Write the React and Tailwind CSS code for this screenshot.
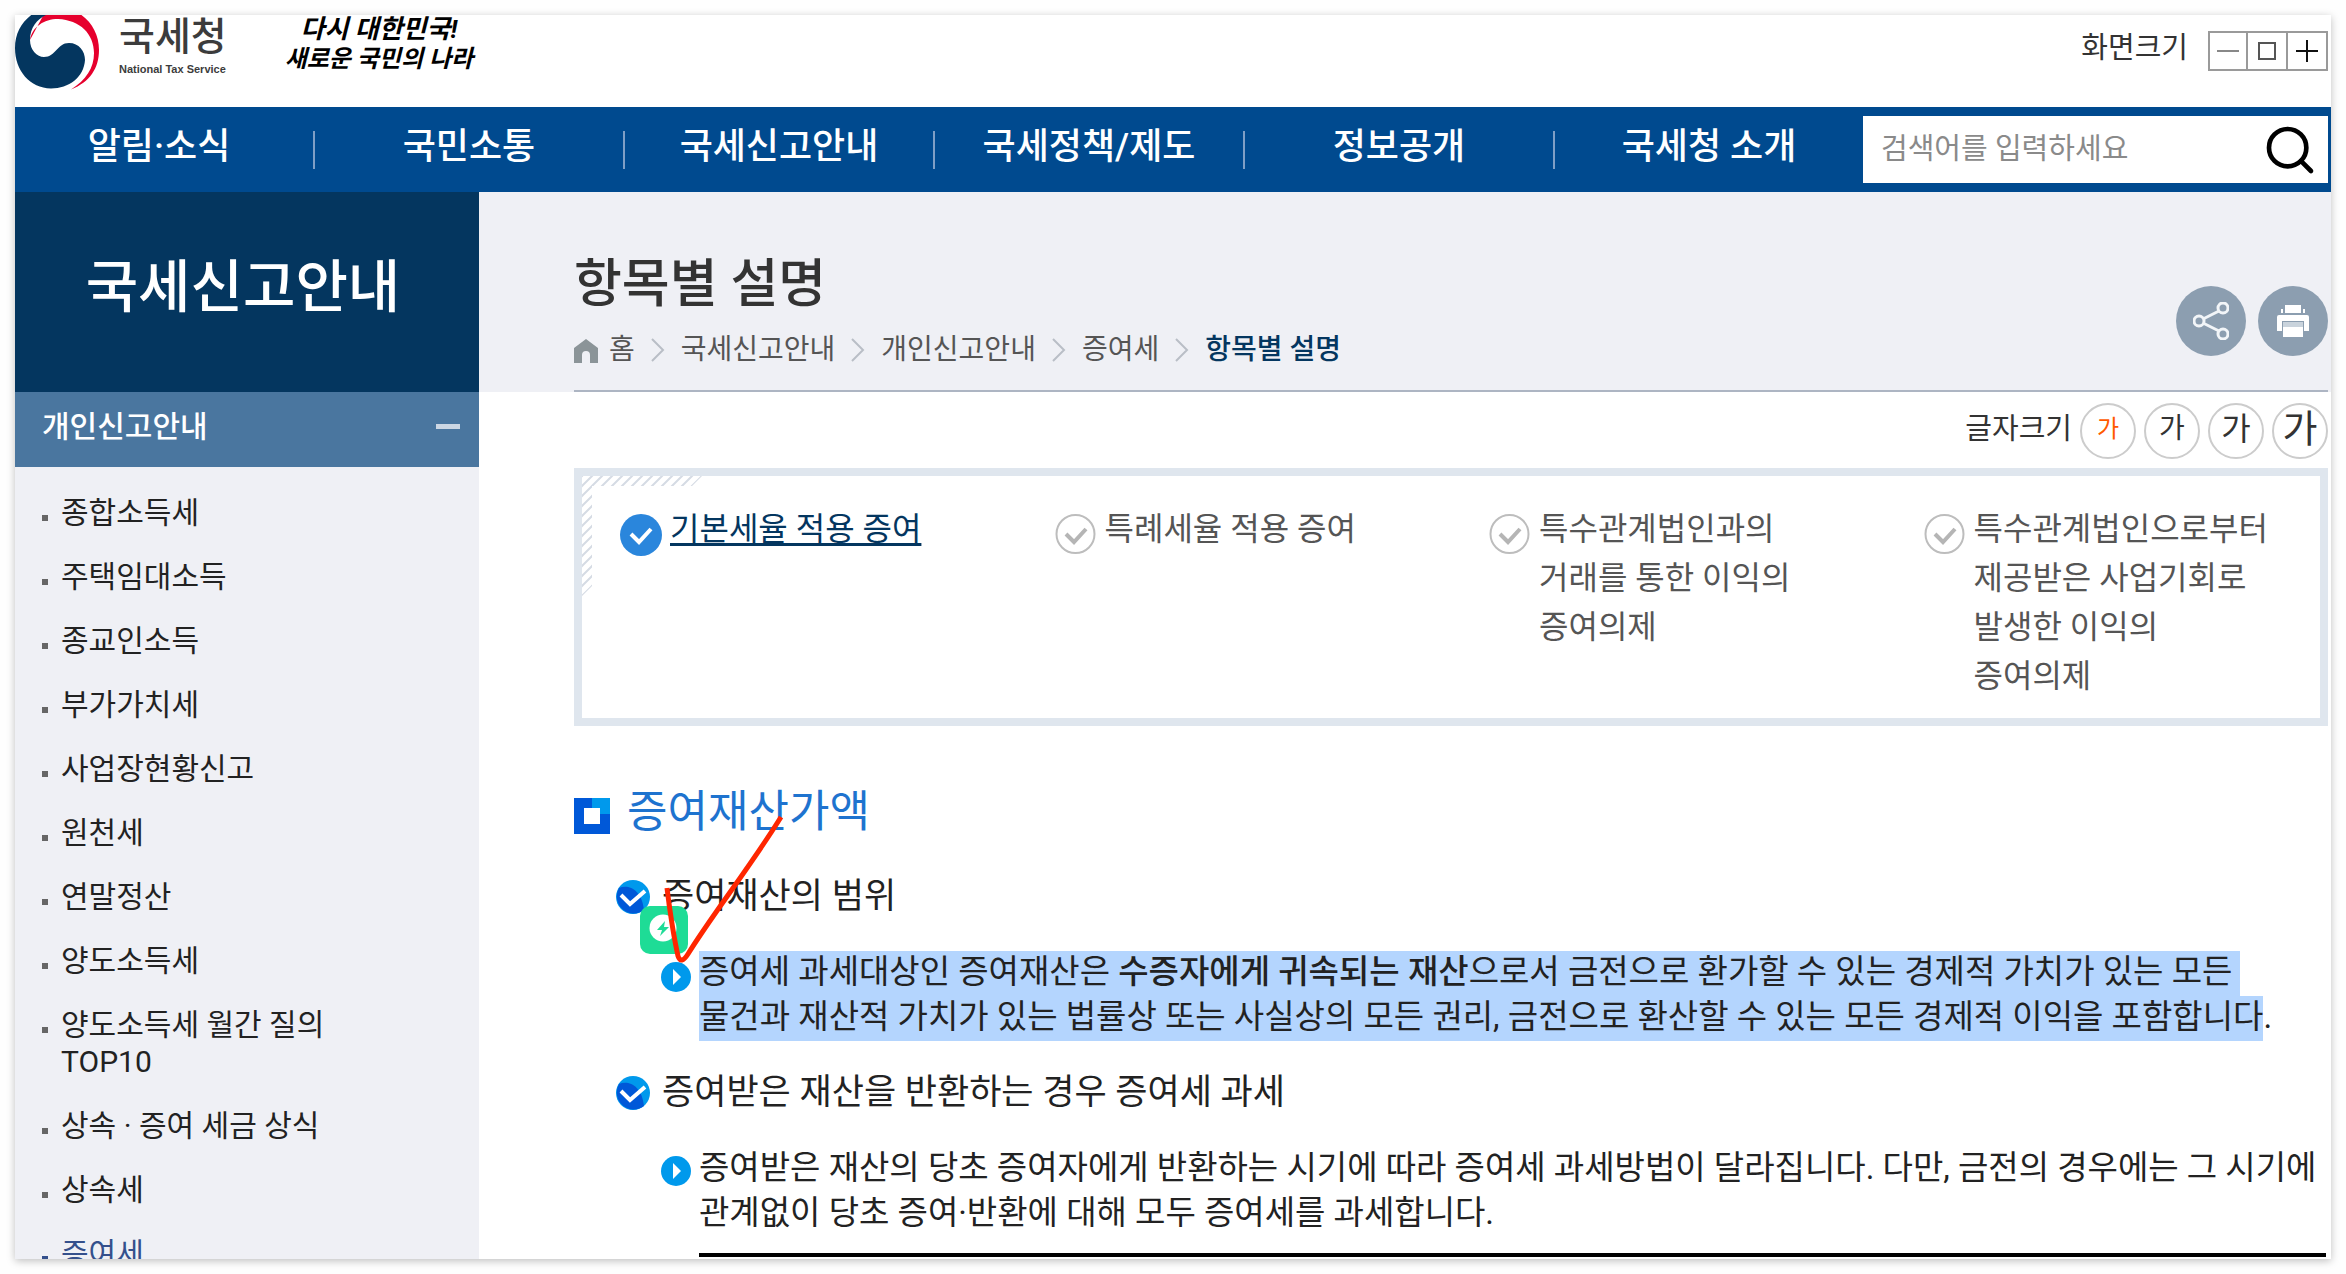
import React, { useState } from 'react';
import { Search } from 'lucide-react';

const navItems = ['알림·소식', '국민소통', '국세신고안내', '국세정책/제도', '정보공개', '국세청 소개'];

const sideItems = [
  '종합소득세',
  '주택임대소득',
  '종교인소득',
  '부가가치세',
  '사업장현황신고',
  '원천세',
  '연말정산',
  '양도소득세',
  '양도소득세 월간 질의 TOP10',
  '상속 · 증여 세금 상식',
  '상속세',
  '증여세',
];

const crumbs = ['국세신고안내', '개인신고안내', '증여세'];

const tabs = [
  ['기본세율 적용 증여'],
  ['특례세율 적용 증여'],
  ['특수관계법인과의', '거래를 통한 이익의', '증여의제'],
  ['특수관계법인으로부터', '제공받은 사업기회로', '발생한 이익의', '증여의제'],
];

const fontSizes = ['text-[24px]', 'text-[28px]', 'text-[32px]', 'text-[38px]'];

function Logo() {
  return (
    <svg className="w-[85px] h-[75px] shrink-0" viewBox="15 15 85 75" aria-hidden="true">
      <path
        d="M30 40C32 27 44 19 58 19C80 20 94 34 94 53C94 68 86 80 71 89.5C90 82 99 68 99 50C99 35 92 22 80 14L44 14Z"
        fill="#e6002d"
      />
      <path
        d="M46 15C37 19 30 28 30 40C30 50 37 57 44 57C56 57 57 43 69 43C79 43 85 51 85 60C84 77 69 88.5 51 88.5C30 88 15 71 15 48C15 33 22 21 34 13Z"
        fill="#04365f"
      />
    </svg>
  );
}

function ShareIcon() {
  return (
    <svg className="w-9 h-[38px]" viewBox="0 0 36 38" fill="none" stroke="#f2f5f8" strokeWidth="3" aria-hidden="true">
      <circle cx="6" cy="19" r="5" />
      <circle cx="30" cy="6" r="5" />
      <circle cx="30" cy="32" r="5" />
      <path d="M10 17L26 9M10 21L26 29" />
    </svg>
  );
}

function PrinterIcon() {
  return (
    <svg className="w-8 h-8" viewBox="0 0 32 32" fill="#fff" aria-hidden="true">
      <path d="M8 0h16v8H8zM4 4h2v4H4zM26 4h2v4h-2zM2 10h28a2 2 0 0 1 2 2v14h-5V16H5v10H0V12a2 2 0 0 1 2-2z" />
      <path d="M6 17h20v5H6z" fill="#c9d3dc" />
      <path d="M6 22h20v10H6z" />
    </svg>
  );
}

function HomeIcon() {
  return (
    <svg className="w-6 h-6 mt-0.5" viewBox="0 0 24 24" aria-hidden="true">
      <path d="M12 0L24 9V24H16V16A4 4 0 0 0 8 16V24H0V9Z" fill="#8b9498" />
    </svg>
  );
}

function Chevron() {
  return (
    <svg className="w-[14px] h-6 mx-4" viewBox="0 0 14 24" fill="none" aria-hidden="true">
      <path d="M1 1l11 11L1 23" stroke="#b9bec6" strokeWidth="2" />
    </svg>
  );
}

function TabCheck({ active }) {
  return (
    <svg className="w-[42px] h-[42px] mt-[9px] shrink-0" viewBox="0 0 42 42" fill="none" aria-hidden="true">
      {active ? (
        <circle cx="21" cy="21" r="21" fill="#2a86dc" />
      ) : (
        <circle cx="20.5" cy="20" r="19" stroke="#bdbdbd" strokeWidth="2" />
      )}
      <path d="M11 20l8 8 12-13" stroke={active ? '#fff' : '#b5b5b5'} strokeWidth="4" />
    </svg>
  );
}

function SquareIcon() {
  return (
    <svg className="w-9 h-9 mt-2" viewBox="0 0 36 36" aria-hidden="true">
      <path d="M0 0h36v36H0z" fill="#0058d8" />
      <path d="M18 0h18v16H18z" fill="#0099ec" />
      <path d="M10 10h16v16H10z" fill="#fff" />
    </svg>
  );
}

function HeadingCheck() {
  return (
    <svg className="w-[34px] h-[34px]" viewBox="0 0 34 34" aria-hidden="true">
      <circle cx="17" cy="17" r="17" fill="#0099ec" />
      <path d="M3 8C12 4 26 9 28 30A17 17 0 0 1 3 8Z" fill="#0058d8" />
      <path d="M5 15l9 9 15-13" fill="none" stroke="#fff" strokeWidth="4" />
    </svg>
  );
}

function ArrowBullet() {
  return (
    <svg className="w-[30px] h-[30px] mt-[11px] shrink-0" viewBox="0 0 30 30" aria-hidden="true">
      <circle cx="15" cy="15" r="15" fill="#0099ec" />
      <path d="M12 7l8 8-8 8z" fill="#fff" />
    </svg>
  );
}

function SubHeading({ children }) {
  return (
    <h3 className="flex items-center gap-3 text-[35px] leading-[50px] text-[#222]">
      <HeadingCheck />
      {children}
    </h3>
  );
}

export default function App() {
  const [query, setQuery] = useState('');
  const [fontSize, setFontSize] = useState(0);

  return (
    <div className="h-screen p-[15px] bg-[#fefefe] font-['Roboto','Noto_Sans_CJK_KR',sans-serif] break-keep">
      <div className="h-full overflow-hidden bg-white shadow-[0_2px_8px_rgba(0,0,0,0.25)]">
        {/* Header */}
        <header className="h-[92px] flex items-start justify-between pr-[3px]">
          <div className="flex items-start">
            <Logo />
            <div className="ml-[19px] text-[#3c3c3c]">
              <div className="text-[39px] leading-[44px] font-medium">국세청</div>
              <div className="font-['Liberation_Sans',sans-serif] text-[11px] leading-4 font-bold mt-0.5">
                National Tax Service
              </div>
            </div>
            <div className="ml-[58px] text-black italic font-bold text-center">
              <div className="text-[26px] leading-7">다시 대한민국!</div>
              <div className="text-[24px] leading-8">새로운 국민의 나라</div>
            </div>
          </div>
          <div className="flex items-start gap-5 pt-4 text-[#333]">
            <span className="text-[29px] leading-[34px]">화면크기</span>
            <div className="flex h-10 border-2 border-[#9a9a9a] divide-x-2 divide-[#9a9a9a]">
              <button className="w-[38px] flex items-center justify-center" aria-label="축소">
                <span className="w-[22px] h-[2px] bg-[#888]" />
              </button>
              <button className="w-10 flex items-center justify-center" aria-label="기본">
                <span className="w-[18px] h-[18px] border-2 border-[#555]" />
              </button>
              <button className="w-[38px] flex items-center justify-center" aria-label="확대">
                <svg className="w-[22px] h-[22px]" viewBox="0 0 22 22" stroke="#111" strokeWidth="2">
                  <path d="M11 0v22M0 11h22" />
                </svg>
              </button>
            </div>
          </div>
        </header>

        {/* Navigation */}
        <div className="h-[85px] flex items-center bg-[#004a8f] pr-[3px]">
          <nav className="flex-1 -ml-[10px]">
            <ul className="flex items-center">
              {navItems.map((item, i) => (
                <li
                  key={item}
                  className={`flex-1 h-[38px] flex items-center justify-center ${
                    i < navItems.length - 1 ? 'border-r-2 border-[#7f9fc6]' : ''
                  }`}
                >
                  <a href="#" className="mb-1.5 text-[36px] leading-[38px] font-medium text-white">
                    {item}
                  </a>
                </li>
              ))}
            </ul>
          </nav>
          <form className="w-[465px] h-[67px] flex items-center bg-white pl-[18px] pr-[10px]">
            <input
              type="text"
              aria-label="검색어"
              value={query}
              onChange={(e) => setQuery(e.target.value)}
              placeholder="검색어를 입력하세요"
              className="flex-1 min-w-0 h-full pb-0.5 text-[29px] text-[#333] placeholder:text-[#8a8a8a] outline-none"
            />
            <button type="button" aria-label="검색">
              <Search className="w-[56px] h-[56px] text-black" strokeWidth={2} />
            </button>
          </form>
        </div>

        <div className="flex">
          {/* Sidebar */}
          <aside className="w-[464px] shrink-0 bg-[#eff0f5]">
            <h2 className="h-[200px] pb-2 pr-2 flex items-center justify-center bg-[#04365f] text-white text-[57px] font-medium">
              국세신고안내
            </h2>
            <button className="w-full h-[75px] pl-[27px] pr-[19px] pb-1.5 flex items-center justify-between bg-[#4a769f] text-white text-[30px] font-medium">
              개인신고안내
              <span className="w-6 h-[5px] bg-[#ccd7e4]" />
            </button>
            <ul className="pt-[27px] flex flex-col gap-[27px]">
              {sideItems.map((item) => (
                <li
                  key={item}
                  className={`flex items-start gap-[13px] pl-[27px] pr-[140px] text-[30px] leading-[37px] ${
                    item === '증여세' ? 'text-[#34508c]' : 'text-[#222]'
                  }`}
                >
                  <span
                    className={`w-[6px] h-[6px] mt-[21px] shrink-0 ${
                      item === '증여세' ? 'bg-[#34508c]' : 'bg-[#666]'
                    }`}
                  />
                  <a href="#">{item}</a>
                </li>
              ))}
            </ul>
          </aside>

          <main className="flex-1 min-w-0">
            {/* Page title */}
            <div className="h-[200px] pl-[95px] pr-[3px] bg-[#eff0f5]">
              <div className="h-full flex justify-between border-b-2 border-[#adb5c3]">
                <div className="pt-[63px]">
                  <h1 className="text-[52px] leading-[60px] font-medium text-[#333]">항목별 설명</h1>
                  <div className="mt-[15px] flex items-center text-[28px] leading-10 text-[#555]">
                    <HomeIcon />
                    <a href="#" className="ml-[11px]">홈</a>
                    {crumbs.map((c) => (
                      <React.Fragment key={c}>
                        <Chevron />
                        <a href="#">{c}</a>
                      </React.Fragment>
                    ))}
                    <Chevron />
                    <span className="font-medium text-[#04365f]">항목별 설명</span>
                  </div>
                </div>
                <div className="flex gap-3 pt-[94px]">
                  <button className="w-[70px] h-[70px] rounded-full bg-[#8c9eb0] flex items-center justify-center" aria-label="공유">
                    <ShareIcon />
                  </button>
                  <button className="w-[70px] h-[70px] rounded-full bg-[#8c9eb0] flex items-center justify-center" aria-label="인쇄">
                    <PrinterIcon />
                  </button>
                </div>
              </div>
            </div>

            <div className="pl-[95px] pr-[3px]">
              {/* Text size */}
              <div className="h-[76px] pt-[11px] flex justify-end gap-2">
                <span className="text-[29px] leading-[52px] text-[#333]">글자크기</span>
                {fontSizes.map((size, i) => (
                  <button
                    key={size}
                    onClick={() => setFontSize(i)}
                    className={`w-14 h-14 pb-1 rounded-full border-2 border-[#ccc] flex items-center justify-center ${size} ${
                      fontSize === i ? 'text-[#ff5a00]' : 'text-[#333]'
                    }`}
                  >
                    가
                  </button>
                ))}
              </div>

              {/* Category tabs */}
              <div className="relative border-8 border-[#dfe6ee] pt-[29px] pb-[17px]">
                <svg className="absolute left-0 top-0 w-[120px] h-[120px]" viewBox="0 0 120 120" aria-hidden="true">
                  <defs>
                    <pattern id="hatch" width="10" height="10" patternUnits="userSpaceOnUse">
                      <path d="M-1 11L11 -1M-1 1L1 -1M9 11L11 9" stroke="#d5dbe4" strokeWidth="2" />
                    </pattern>
                  </defs>
                  <path d="M0 0H120L110 10H10V110L0 120Z" fill="url(#hatch)" />
                </svg>
                <ul className="grid grid-cols-4">
                  {tabs.map((lines, i) => (
                    <li key={lines[0]} className="flex items-start gap-2 pl-[38px]">
                      <TabCheck active={i === 0} />
                      <a
                        href="#"
                        className={`text-[32px] leading-[49px] ${
                          i === 0 ? 'text-[#04365f] underline decoration-3 underline-offset-3' : 'text-[#555]'
                        }`}
                      >
                        {lines.map((line) => (
                          <span key={line} className="block whitespace-nowrap">{line}</span>
                        ))}
                      </a>
                    </li>
                  ))}
                </ul>
              </div>

              {/* Content */}
              <h2 className="mt-14 flex items-center gap-[17px] text-[44px] leading-[60px] text-[#1e73cf]">
                <SquareIcon />
                증여재산가액
              </h2>

              <section className="relative mt-[30px] pl-[42px]">
                <SubHeading>증여재산의 범위</SubHeading>
                <div className="mt-[29px] ml-[45px] flex items-start gap-2 text-[33px] leading-[41px] text-[#222] whitespace-nowrap">
                  <ArrowBullet />
                  <p>
                    <mark className="inline-block h-[45px] pr-2 bg-[#b4d5fe] text-[#222]">
                      증여세 과세대상인 증여재산은 <span className="font-medium">수증자에게 귀속되는 재산</span>으로서 금전으로 환가할 수 있는 경제적 가치가 있는 모든
                    </mark>
                    <br />
                    <mark className="inline-block h-[45px] bg-[#b4d5fe] text-[#222]">
                      물건과 재산적 가치가 있는 법률상 또는 사실상의 모든 권리, 금전으로 환산할 수 있는 모든 경제적 이익을 포함합니다
                    </mark>
                    .
                  </p>
                </div>

                {/* Floating badge and pen mark */}
                <div className="absolute left-[66px] top-[34px] w-12 h-12 rounded-[10px] bg-[#1edc96]">
                  <svg className="w-12 h-12" viewBox="0 0 48 48" aria-hidden="true">
                    <circle cx="23" cy="22" r="13.5" fill="#fff" />
                    <path d="M25 15l-8 9h5l-2 6 9-9h-5z" fill="#1edc96" />
                  </svg>
                </div>
                <svg className="absolute left-[86px] -top-[58px] w-[130px] h-[150px]" viewBox="0 0 130 150" fill="none" aria-hidden="true">
                  <path d="M7 74C10 98 14 124 18 142Q21 151 28 140C50 104 92 50 121 3" stroke="#ff2600" strokeWidth="5" />
                </svg>
              </section>

              <section className="mt-[27px] pl-[42px]">
                <SubHeading>증여받은 재산을 반환하는 경우 증여세 과세</SubHeading>
                <div className="mt-[27px] ml-[45px] flex items-start gap-2 text-[33px] leading-[45px] text-[#222]">
                  <ArrowBullet />
                  <div className="flex-1 pr-[2px]">
                    <p className="whitespace-nowrap">
                      증여받은 재산의 당초 증여자에게 반환하는 시기에 따라 증여세 과세방법이 달라집니다. 다만, 금전의 경우에는 그 시기에
                      <br />
                      관계없이 당초 증여·반환에 대해 모두 증여세를 과세합니다.
                    </p>
                    <div className="mt-[18px] h-1 bg-black" />
                  </div>
                </div>
              </section>
            </div>
          </main>
        </div>
      </div>
    </div>
  );
}
